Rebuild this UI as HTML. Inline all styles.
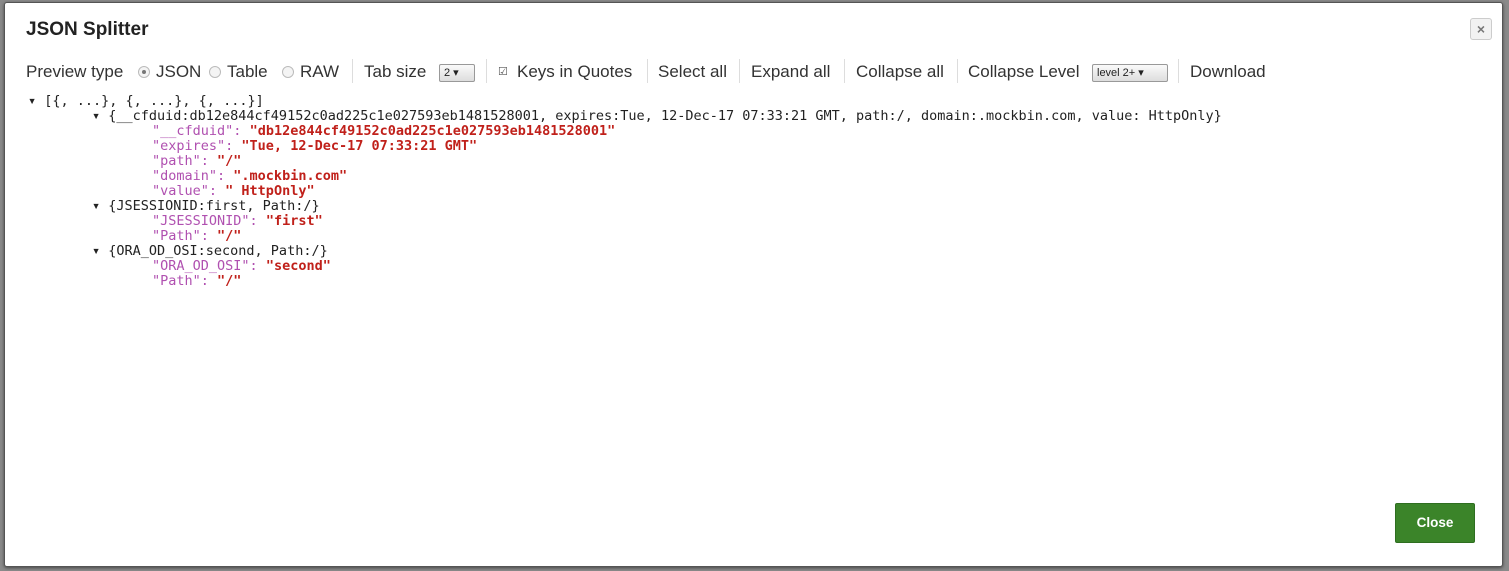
<!DOCTYPE html>
<html><head><meta charset="utf-8"><style>
body{margin:0;width:1509px;height:571px;background:#8a8a8a;position:relative;overflow:hidden;font-family:"Liberation Sans",sans-serif;}
.dlg{position:absolute;left:4px;top:2px;width:1497px;height:563px;background:#fff;border:1px solid #555;border-radius:3px;box-shadow:0 1px 3px rgba(0,0,0,.5);}
.title{position:absolute;left:26px;top:19px;font-size:19px;font-weight:bold;color:#222;}
.x{position:absolute;left:1470px;top:18px;width:20px;height:20px;border:1px solid #ccc;border-radius:3px;background:#f2f2f2;color:#777;font-size:14px;text-align:center;line-height:20px;font-weight:bold;}
.tb{position:absolute;top:62px;font-size:17px;color:#333;white-space:nowrap;}
.sep{position:absolute;top:59px;width:1px;height:24px;background:#ddd;}
.rad{display:inline-block;width:10px;height:10px;border:1px solid #bbb;border-radius:50%;background:#f4f4f4;position:absolute;top:66px;}
.rad.on::after{content:"";position:absolute;left:3px;top:3px;width:4px;height:4px;border-radius:50%;background:#777;}
.sel{position:absolute;top:64px;height:16px;border:1px solid #999;border-radius:2px;background:linear-gradient(#fafafa,#ddd);font-size:11px;line-height:16px;color:#222;padding-left:4px;}
.mono{position:absolute;font-family:"DejaVu Sans Mono",monospace;font-size:13.5px;white-space:pre;color:#222;line-height:15px;}
.k{color:#b050b0}.v{color:#c0201a;font-weight:bold}
.btn{position:absolute;left:1395px;top:503px;width:78px;height:38px;background:#3b8429;border:1px solid #2e6e20;border-radius:2px;color:#fff;font-weight:bold;font-size:13.5px;text-align:center;line-height:38px;}
</style></head><body>
<div class="dlg"></div>
<div class="title">JSON Splitter</div>
<div class="x">×</div>
<div class="tb" style="left:26px">Preview type</div>
<span class="rad on" style="left:138px"></span><div class="tb" style="left:156px">JSON</div>
<span class="rad" style="left:209px"></span><div class="tb" style="left:227px">Table</div>
<span class="rad" style="left:282px"></span><div class="tb" style="left:300px">RAW</div>
<div class="sep" style="left:352px"></div>
<div class="tb" style="left:364px">Tab size</div>
<div class="sel" style="left:439px;width:30px">2 ▾</div>
<div class="sep" style="left:486px"></div>
<div class="tb" style="left:498px;font-size:11px;top:65px;color:#555">☑</div>
<div class="tb" style="left:517px">Keys in Quotes</div>
<div class="sep" style="left:647px"></div>
<div class="tb" style="left:658px">Select all</div>
<div class="sep" style="left:739px"></div>
<div class="tb" style="left:751px">Expand all</div>
<div class="sep" style="left:844px"></div>
<div class="tb" style="left:856px">Collapse all</div>
<div class="sep" style="left:957px"></div>
<div class="tb" style="left:968px">Collapse Level</div>
<div class="sel" style="left:1092px;width:70px">level 2+ ▾</div>
<div class="sep" style="left:1178px"></div>
<div class="tb" style="left:1190px">Download</div>
<div class="mono" style="left:28px;top:94px">▾ [{, ...}, {, ...}, {, ...}]</div>
<div class="mono" style="left:92px;top:109px">▾ {__cfduid:db12e844cf49152c0ad225c1e027593eb1481528001, expires:Tue, 12-Dec-17 07:33:21 GMT, path:/, domain:.mockbin.com, value: HttpOnly}</div>
<div class="mono" style="left:152px;top:124px"><span class="k">"__cfduid"</span><span class="k">:</span> <span class="v">"db12e844cf49152c0ad225c1e027593eb1481528001"</span>
<span class="k">"expires":</span> <span class="v">"Tue, 12-Dec-17 07:33:21 GMT"</span>
<span class="k">"path":</span> <span class="v">"/"</span>
<span class="k">"domain":</span> <span class="v">".mockbin.com"</span>
<span class="k">"value":</span> <span class="v">" HttpOnly"</span></div>
<div class="mono" style="left:92px;top:199px">▾ {JSESSIONID:first, Path:/}</div>
<div class="mono" style="left:152px;top:214px"><span class="k">"JSESSIONID":</span> <span class="v">"first"</span>
<span class="k">"Path":</span> <span class="v">"/"</span></div>
<div class="mono" style="left:92px;top:244px">▾ {ORA_OD_OSI:second, Path:/}</div>
<div class="mono" style="left:152px;top:259px"><span class="k">"ORA_OD_OSI":</span> <span class="v">"second"</span>
<span class="k">"Path":</span> <span class="v">"/"</span></div>
<div class="btn">Close</div>
</body></html>
